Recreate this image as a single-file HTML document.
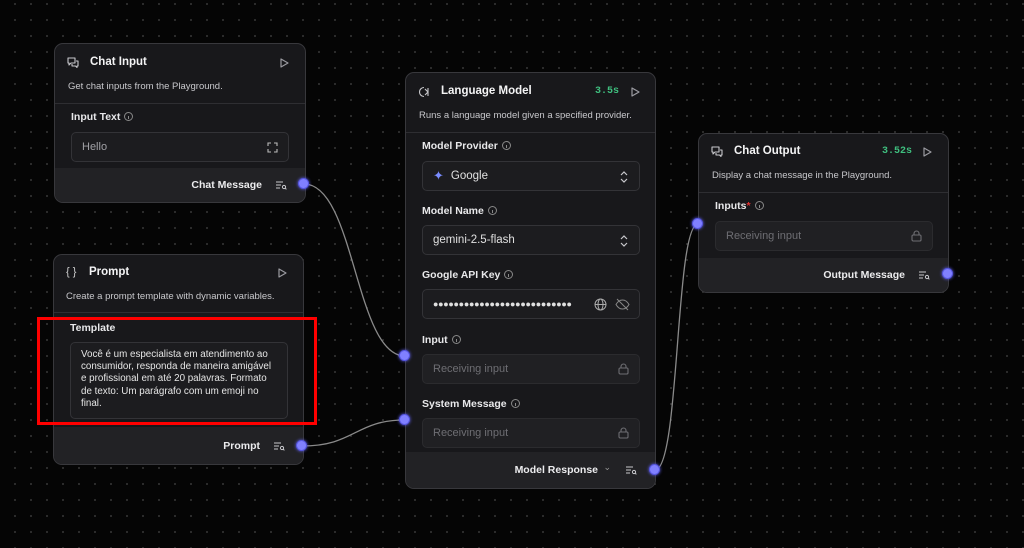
<!DOCTYPE html>
<html><head><meta charset="utf-8"><style>
*{box-sizing:border-box;margin:0;padding:0}
body{width:1024px;height:548px;overflow:hidden;background:#050505;background-image:radial-gradient(circle,#363636 0.8px,transparent 1.1px);background-size:16px 16px;background-position:7px -4px;font-family:"Liberation Sans",sans-serif;position:relative;color:#f2f2f2}
.card{position:absolute;background:#18181b;border:1px solid #38383c;border-radius:9px;overflow:hidden}
.t{position:absolute;font-size:11.5px;font-weight:bold;color:#f4f4f5}
.d{position:absolute;font-size:9.5px;color:#c8c8cc}
.hr{position:absolute;left:0;right:0;height:1px;background:#2e2e32}
.lbl{position:absolute;font-size:10.5px;font-weight:bold;color:#e8e8ea}
.info{display:inline-block;width:9px;height:9px;border:1px solid #888;border-radius:50%;margin-left:4px;vertical-align:-1px;position:relative}
.info:after{content:"";position:absolute;left:3px;top:3px;width:1px;height:3px;background:#888}
.box{position:absolute;background:#1c1c1f;border:1px solid #333337;border-radius:5px;font-size:11px;color:#e0e0e0;padding-left:10px;display:flex;align-items:center}
.dis{color:#6e6e73;background:#202023;border-color:#2b2b2e}
.foot{position:absolute;left:0;right:0;bottom:0;background:#222225}
.fl{position:absolute;font-size:10.5px;font-weight:bold;color:#ececee}
.h{position:absolute;width:11px;height:11px;border-radius:50%;background:#8080ff;border:1.5px solid #5656e0;box-shadow:0 0 3px #6666ff}
.time{position:absolute;font-family:"Liberation Mono",monospace;font-size:10px;color:#3fbf7f;font-weight:bold}
</style></head><body>
<svg style="position:absolute;left:0;top:0" width="1024" height="548">
<path d="M304 184 C 355 184, 355 356, 405 356" stroke="#8a8a8a" stroke-width="1.3" fill="none"/>
<path d="M302 446 C 355 446, 355 420, 405 420" stroke="#8a8a8a" stroke-width="1.3" fill="none"/>
<path d="M655 470 C 680 470, 675 224, 698 224" stroke="#8a8a8a" stroke-width="1.3" fill="none"/>
</svg>
<svg width="0" height="0" style="position:absolute"><defs>
<g id="pl"><path d="M1 1 L8 5 L1 9 Z" fill="none" stroke="#9a9aa0" stroke-width="1.2" stroke-linejoin="round"/></g>
<g id="fi"><path d="M1 2h7M1 5h5M1 8h4" stroke="#c8c8cc" stroke-width="1.1"/><circle cx="9" cy="7" r="1.6" fill="none" stroke="#c8c8cc" stroke-width="1"/><path d="M10.2 8.2l1.2 1.2" stroke="#c8c8cc"/></g>
<g id="lk"><rect x="1" y="5" width="9" height="6" rx="1.2" fill="none" stroke="#6e6e73" stroke-width="1.1"/><path d="M3 5V3.5a2.5 2.5 0 0 1 5 0V5" fill="none" stroke="#6e6e73" stroke-width="1.1"/></g>
<g id="ch"><path d="M1 4l3-3 3 3M1 8l3 3 3-3" fill="none" stroke="#c8c8cc" stroke-width="1.2"/></g>
<g id="msg"><path d="M1 1h7v5H4l-2 2V6H1z M9 4h2v5h-1v1.5L8.5 9H5V7" fill="none" stroke="#c8c8cc" stroke-width="1.1" stroke-linejoin="round"/></g>
</defs></svg>

<!-- Chat Input -->
<div class="card" style="left:54px;top:43px;width:252px;height:160px">
<svg style="position:absolute;left:12px;top:13px" width="13" height="12"><use href="#msg"/></svg>
<div class="t" style="left:35px;top:12px">Chat Input</div>
<svg style="position:absolute;left:225px;top:14px" width="10" height="10"><use href="#pl"/></svg>
<div class="d" style="left:13px;top:37px">Get chat inputs from the Playground.</div>
<div class="hr" style="top:59px"></div>
<div class="lbl" style="left:16px;top:67px">Input Text<span class="info"></span></div>
<div class="box" style="left:16px;top:88px;width:218px;height:30px;color:#a0a0a5">Hello
<svg style="position:absolute;right:10px;top:9px" width="11" height="11"><path d="M1 4V1h3M7 1h3v3M10 7v3H7M4 10H1V7" fill="none" stroke="#bbb" stroke-width="1.1"/></svg></div>
<div class="foot" style="height:34px"><div class="fl" style="right:43px;top:11px">Chat Message</div>
<svg style="position:absolute;right:17px;top:12px" width="13" height="11"><use href="#fi"/></svg></div>
</div>
<div class="h" style="left:298px;top:178px"></div>

<!-- Prompt -->
<div class="card" style="left:53px;top:254px;width:251px;height:211px">
<div style="position:absolute;left:12px;top:11px;font-size:11px;color:#ccc">{ }</div>
<div class="t" style="left:35px;top:11px">Prompt</div>
<svg style="position:absolute;left:224px;top:13px" width="10" height="10"><use href="#pl"/></svg>
<div class="d" style="left:12px;top:36px">Create a prompt template with dynamic variables.</div>
<div class="hr" style="top:57px"></div>
<div class="lbl" style="left:16px;top:67px">Template</div>
<div class="box" style="left:16px;top:87px;width:218px;height:77px;display:block;padding:6px 10px;font-size:9.8px;line-height:12.2px;color:#e6e6e6">Você é um especialista em atendimento ao consumidor, responda de maneira amigável e profissional em até 20 palavras. Formato de texto: Um parágrafo com um emoji no final.</div>
<div class="foot" style="height:37px"><div class="fl" style="right:43px;top:13px">Prompt</div>
<svg style="position:absolute;right:17px;top:14px" width="13" height="11"><use href="#fi"/></svg></div>
</div>
<div class="h" style="left:296px;top:440px"></div>
<div style="position:absolute;left:37px;top:317px;width:280px;height:108px;border:3.5px solid #f00"></div>

<!-- Language Model -->
<div class="card" style="left:405px;top:72px;width:251px;height:417px">
<svg style="position:absolute;left:12px;top:13px" width="12" height="12"><path d="M6 1.5a4.5 4.5 0 1 0 0 9M7 3l3 3-3 3M10 2v8" fill="none" stroke="#c8c8cc" stroke-width="1.1"/></svg>
<div class="t" style="left:35px;top:12px">Language Model</div>
<div class="time" style="left:189px;top:13px">3.5s</div>
<svg style="position:absolute;left:225px;top:14px" width="10" height="10"><use href="#pl"/></svg>
<div class="d" style="left:13px;top:37px">Runs a language model given a specified provider.</div>
<div class="hr" style="top:59px"></div>
<div class="lbl" style="left:16px;top:67px">Model Provider<span class="info"></span></div>
<div class="box" style="left:16px;top:88px;width:218px;height:30px;font-size:11.5px"><span style="color:#7a8cff;margin-right:7px;font-size:13px">✦</span>Google
<svg style="position:absolute;right:11px;top:9px" width="8" height="12"><use href="#ch"/></svg></div>
<div class="lbl" style="left:16px;top:132px">Model Name<span class="info"></span></div>
<div class="box" style="left:16px;top:152px;width:218px;height:30px;font-size:11.5px">gemini-2.5-flash
<svg style="position:absolute;right:11px;top:9px" width="8" height="12"><use href="#ch"/></svg></div>
<div class="lbl" style="left:16px;top:196px">Google API Key<span class="info"></span></div>
<div class="box" style="left:16px;top:216px;width:218px;height:30px;font-size:9px;letter-spacing:-0.3px">●●●●●●●●●●●●●●●●●●●●●●●●●●●
<svg style="position:absolute;right:32px;top:8px" width="13" height="13"><circle cx="6.5" cy="6.5" r="5.5" fill="none" stroke="#aaa"/><ellipse cx="6.5" cy="6.5" rx="2.5" ry="5.5" fill="none" stroke="#aaa"/><path d="M1 6.5h11" stroke="#aaa"/></svg>
<svg style="position:absolute;right:9px;top:8px" width="15" height="13"><path d="M1 6.5C3 3 5 2 7.5 2s4.5 1 6.5 4.5C12 10 10 11 7.5 11S3 10 1 6.5z" fill="none" stroke="#888"/><path d="M2 1l11 11" stroke="#888"/></svg></div>
<div class="lbl" style="left:16px;top:261px">Input<span class="info"></span></div>
<div class="box dis" style="left:16px;top:281px;width:218px;height:30px">Receiving input
<svg style="position:absolute;right:9px;top:8px" width="12" height="12"><use href="#lk"/></svg></div>
<div class="lbl" style="left:16px;top:325px">System Message<span class="info"></span></div>
<div class="box dis" style="left:16px;top:345px;width:218px;height:30px">Receiving input
<svg style="position:absolute;right:9px;top:8px" width="12" height="12"><use href="#lk"/></svg></div>
<div class="foot" style="height:36px"><div class="fl" style="right:57px;top:12px">Model Response</div>
<div style="position:absolute;right:44px;top:10px;font-size:9px;color:#999">⌄</div>
<svg style="position:absolute;right:17px;top:13px" width="13" height="11"><use href="#fi"/></svg></div>
</div>
<div class="h" style="left:399px;top:350px"></div>
<div class="h" style="left:399px;top:414px"></div>
<div class="h" style="left:649px;top:464px"></div>

<!-- Chat Output -->
<div class="card" style="left:698px;top:133px;width:251px;height:160px">
<svg style="position:absolute;left:12px;top:12px" width="13" height="12"><use href="#msg"/></svg>
<div class="t" style="left:35px;top:11px">Chat Output</div>
<div class="time" style="left:183px;top:12px">3.52s</div>
<svg style="position:absolute;left:224px;top:13px" width="10" height="10"><use href="#pl"/></svg>
<div class="d" style="left:13px;top:36px">Display a chat message in the Playground.</div>
<div class="hr" style="top:58px"></div>
<div class="lbl" style="left:16px;top:66px">Inputs<span style="color:#e03030">*</span><span class="info"></span></div>
<div class="box dis" style="left:16px;top:87px;width:218px;height:30px">Receiving input
<svg style="position:absolute;right:9px;top:8px" width="12" height="12"><use href="#lk"/></svg></div>
<div class="foot" style="height:34px"><div class="fl" style="right:43px;top:11px">Output Message</div>
<svg style="position:absolute;right:17px;top:12px" width="13" height="11"><use href="#fi"/></svg></div>
</div>
<div class="h" style="left:692px;top:218px"></div>
<div class="h" style="left:942px;top:268px"></div>
</body></html>
